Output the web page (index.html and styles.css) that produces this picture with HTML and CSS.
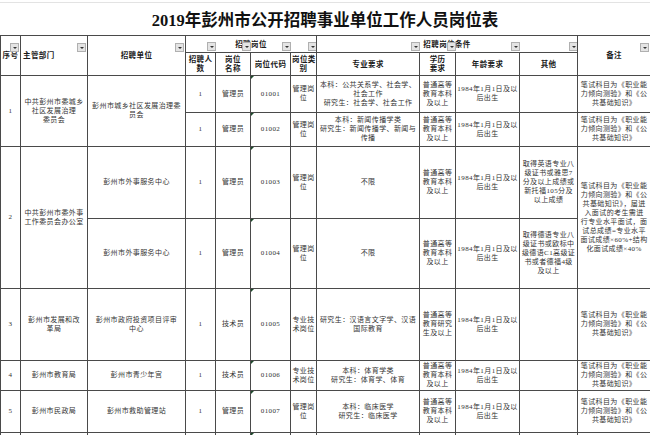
FILE: index.html
```html
<!DOCTYPE html>
<html lang="zh-CN">
<head>
<meta charset="utf-8">
<title>2019年彭州市公开招聘事业单位工作人员岗位表</title>
<link rel="stylesheet" href="styles.css">
</head>
<body>
<div class="sheet">
  <div class="topline"></div>
  <h1 class="title">2019年彭州市公开招聘事业单位工作人员岗位表</h1>
  <table class="tbl">
    <colgroup>
      <col class="w20"><col class="w67"><col class="w98"><col class="w30"><col class="w35"><col class="w40"><col class="w26"><col class="w103"><col class="w36"><col class="w64"><col class="w58"><col class="w73">
    </colgroup>
    <thead>
      <tr class="hr1">
        <th rowspan="2">序号<i class="fb fb-abs"></i></th>
        <th rowspan="2" class="left">主管部门<i class="fb fb-abs"></i></th>
        <th rowspan="2">招聘单位<i class="fb fb-abs"></i></th>
        <th colspan="4" class="grp">招聘岗位
          <div class="fbar fbar-post"><i class="fb"></i><i class="fb"></i><i class="fb"></i><i class="fb"></i></div>
        </th>
        <th colspan="4" class="grp">招聘岗位条件
          <div class="fbar fbar-cond"><i class="fb"></i><i class="fb"></i><i class="fb"></i><i class="fb"></i></div>
        </th>
        <th rowspan="2">备注<i class="fb fb-abs"></i></th>
      </tr>
      <tr class="hr2">
        <th>招聘人<br>数</th>
        <th>岗位<br>名称</th>
        <th>岗位代码</th>
        <th>岗位类<br>别</th>
        <th>专业要求</th>
        <th>学历<br>要求</th>
        <th>年龄要求</th>
        <th>其他</th>
      </tr>
    </thead>
    <tbody>
      <tr class="r1a">
        <td rowspan="2">1</td>
        <td rowspan="2">中共彭州市委城乡<br>社区发展治理<br>委员会</td>
        <td rowspan="2">彭州市城乡社区发展治理委<br>员会</td>
        <td>1</td>
        <td>管理员</td>
        <td class="code">01001</td>
        <td>管理岗<br>位</td>
        <td>本科：公共关系学、社会学、<br>社会工作<br>研究生：社会学、社会工作</td>
        <td>普通高等<br>教育本科<br>及以上</td>
        <td>1984年1月1日及以<br>后出生</td>
        <td></td>
        <td>笔试科目为《职业能<br>力倾向测验》和《公<br>共基础知识》</td>
      </tr>
      <tr class="r1b">
        <td>1</td>
        <td>管理员</td>
        <td class="code">01002</td>
        <td>管理岗<br>位</td>
        <td>本科：新闻传播学类<br>研究生：新闻传播学、新闻与<br>传播</td>
        <td>普通高等<br>教育本科<br>及以上</td>
        <td>1984年1月1日及以<br>后出生</td>
        <td></td>
        <td>笔试科目为《职业能<br>力倾向测验》和《公<br>共基础知识》</td>
      </tr>
      <tr class="r2a">
        <td rowspan="2">2</td>
        <td rowspan="2">中共彭州市委外事<br>工作委员会办公室</td>
        <td>彭州市外事服务中心</td>
        <td>1</td>
        <td>管理员</td>
        <td class="code">01003</td>
        <td>管理岗<br>位</td>
        <td>不限</td>
        <td>普通高等<br>教育本科<br>及以上</td>
        <td>1984年1月1日及以<br>后出生</td>
        <td>取得英语专业八<br>级证书或雅思7<br>分及以上成绩或<br>新托福105分及<br>以上成绩</td>
        <td rowspan="2">笔试科目为《职业能<br>力倾向测验》和《公<br>共基础知识》，届进<br>入面试的考生需进<br>行专业水平面试，面<br>试总成绩=专业水平<br>面试成绩×60%+结构<br>化面试成绩×40%</td>
      </tr>
      <tr class="r2b">
        <td>彭州市外事服务中心</td>
        <td>1</td>
        <td>管理员</td>
        <td class="code">01004</td>
        <td>管理岗<br>位</td>
        <td>不限</td>
        <td>普通高等<br>教育本科<br>及以上</td>
        <td>1984年1月1日及以<br>后出生</td>
        <td>取得德语专业八<br>级证书或欧标中<br>级德语C1高级证<br>书或者德福4级<br>及以上</td>
      </tr>
      <tr class="r3">
        <td>3</td>
        <td>彭州市发展和改<br>革局</td>
        <td>彭州市政府投资项目评审<br>中心</td>
        <td>1</td>
        <td>技术员</td>
        <td class="code">01005</td>
        <td>专业技<br>术岗位</td>
        <td>研究生：汉语言文字学、汉语<br>国际教育</td>
        <td>普通高等<br>教育研究<br>生及以上</td>
        <td>1984年1月1日及以<br>后出生</td>
        <td></td>
        <td>笔试科目为《职业能<br>力倾向测验》和《公<br>共基础知识》</td>
      </tr>
      <tr class="r4">
        <td>4</td>
        <td>彭州市教育局</td>
        <td>彭州市青少年宫</td>
        <td>1</td>
        <td>技术员</td>
        <td class="code">01006</td>
        <td>专业技<br>术岗位</td>
        <td>本科：体育学类<br>研究生：体育学、体育</td>
        <td>普通高等<br>教育本科<br>及以上</td>
        <td>1984年1月1日及以<br>后出生</td>
        <td></td>
        <td>笔试科目为《职业能<br>力倾向测验》和《公<br>共基础知识》</td>
      </tr>
      <tr class="r5">
        <td>5</td>
        <td>彭州市民政局</td>
        <td>彭州市救助管理站</td>
        <td>1</td>
        <td>管理员</td>
        <td class="code">01007</td>
        <td>管理岗<br>位</td>
        <td>本科：临床医学<br>研究生：临床医学</td>
        <td>普通高等<br>教育本科<br>及以上</td>
        <td>1984年1月1日及以<br>后出生</td>
        <td></td>
        <td>笔试科目为《职业能<br>力倾向测验》和《公<br>共基础知识》</td>
      </tr>
      <tr class="r6">
        <td></td><td></td><td></td><td></td><td></td><td class="code"></td><td></td><td></td><td></td><td></td><td></td><td></td>
      </tr>
    </tbody>
  </table>
</div>
</body>
</html>
```
FILE: styles.css
```css
* { box-sizing: border-box; }
html, body { margin: 0; padding: 0; background: #fff; }
body {
  width: 650px;
  height: 435px;
  overflow: hidden;
  font-family: "Liberation Serif", "Noto Sans CJK SC", serif;
  color: #333;
}
.sheet { width: 650px; }
.topline { height: 3px; border-bottom: 1px solid #e3e3e3; }
.title {
  margin: 0;
  height: 32px;
  display: flex;
  align-items: center;
  justify-content: center;
  font-size: 16.5px;
  font-weight: bold;
  color: #111;
  letter-spacing: 0;
}
.tbl {
  border-collapse: collapse;
  table-layout: fixed;
  width: 650px;
  font-size: 7px;
  letter-spacing: 0.4px;
}
.w20 { width: 20px; } .w67 { width: 67px; } .w98 { width: 98px; } .w30 { width: 30px; }
.w35 { width: 35px; } .w40 { width: 40px; } .w26 { width: 26px; } .w103 { width: 103px; }
.w36 { width: 36px; } .w64 { width: 64px; } .w58 { width: 58px; } .w73 { width: 73px; }
.tbl th, .tbl td {
  border: 1px solid #4a4a4a;
  padding: 0 1px;
  text-align: center;
  vertical-align: middle;
  line-height: 9px;
  position: relative;
  white-space: nowrap;
  overflow: hidden;
}
.tbl th { font-weight: bold; font-size: 7.5px; color: #1a1a1a; }
.tbl th.left { text-align: left; padding-left: 2px; }
.hr1 { height: 17px; }
.hr2 { height: 23px; }
.r1a { height: 37px; }
.r1b { height: 34px; }
.r2a { height: 72px; }
.r2b { height: 70px; }
.r3 { height: 72px; }
.r4 { height: 30px; }
.r5 { height: 42px; }
.r6 { height: 20px; }

.fb {
  display: block;
  width: 9px;
  height: 9px;
  background: #e4e4e4;
  border: 1px solid #b0b0b0;
  position: relative;
}
.fb::after {
  content: "";
  position: absolute;
  left: 1.5px;
  top: 3px;
  border-left: 2.5px solid transparent;
  border-right: 2.5px solid transparent;
  border-top: 2.5px solid #333;
}
.fb-abs { position: absolute; top: 7px; right: 1px; }
.fbar {
  position: absolute;
  inset: 0;
  display: grid;
  align-items: end;
  justify-items: end;
  padding: 0 0 1px 0;
}
.fbar-post { grid-template-columns: 30px 35px 40px 26px; }
.fbar-cond { grid-template-columns: 103px 36px 64px 58px; }
.code::before {
  content: "";
  position: absolute;
  left: 0;
  top: 0;
  border-top: 3px solid #1e4a2c;
  border-right: 3px solid transparent;
}
```
